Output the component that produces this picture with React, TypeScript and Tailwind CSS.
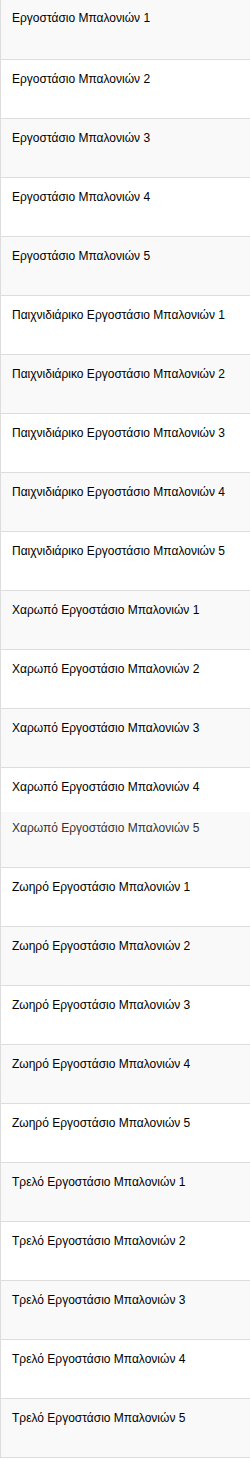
import React from "react";

const prefixes = ["", "Παιχνιδιάρικο ", "Χαρωπό ", "Ζωηρό ", "Τρελό "];

export default function App() {
  const items: string[] = [];
  prefixes.forEach((p) => {
    for (let i = 1; i <= 5; i++) items.push(`${p}Εργοστάσιο Μπαλονιών ${i}`);
  });
  return (
    <div
      className="w-[250px] flex flex-col border-l border-[#dddddd] bg-white"
      style={{ fontFamily: '"Liberation Sans", Arial, sans-serif' }}
    >
      {items.map((t, idx) => {
        const gray = idx % 2 === 0;
        let cls = "h-[59px] border-b border-[#dddddd] pt-[12px] pl-[11px]";
        if (idx === 0) cls = "h-[60px] border-b border-[#dddddd] pt-[11px] pl-[11px]";
        if (idx === 13) cls = "h-[44px] pt-[12px] pl-[11px]";
        if (idx === 14) cls = "h-[56px] border-b border-[#dddddd] pt-[9px] pl-[11px] text-[#333333]";
        return (
          <div
            key={idx}
            className={`${cls} ${gray ? "bg-[#f9f9f9]" : "bg-white"} text-[12px] leading-[14px] ${idx === 14 ? "" : "text-black"}`}
          >
            {t}
          </div>
        );
      })}
    </div>
  );
}
